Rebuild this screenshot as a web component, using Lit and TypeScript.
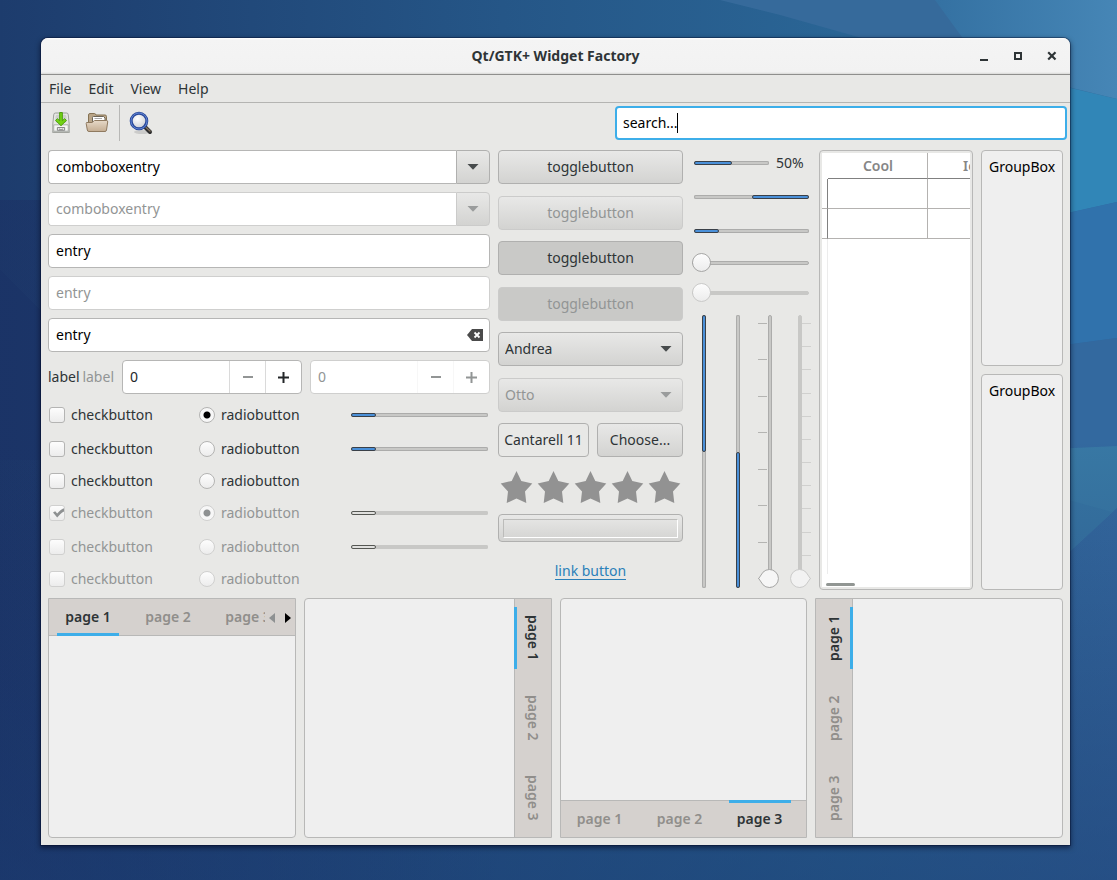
import { LitElement, html, css, svg, nothing } from "lit";
import { customElement, property } from "lit/decorators.js";
import { classMap } from "lit/directives/class-map.js";

const base = css`
  *,
  *::before,
  *::after {
    box-sizing: border-box;
  }
  button,
  input,
  select {
    font: inherit;
    color: inherit;
    margin: 0;
    outline: none;
  }
`;

const arrowDown = html`<svg class="arrow" width="12" height="6" viewBox="0 0 12 6" aria-hidden="true"><path d="M0.5 0H11.5L6 5.8Z" fill="currentColor" /></svg>`;

/** Tabbed pane with its tab bar on any of the four sides. */
@customElement("tab-pane")
class TabPane extends LitElement {
  @property() side = "top";
  @property({ type: Number }) active = 1;
  @property({ type: Boolean }) scroll = false;

  static styles = [
    base,
    css`
      :host {
        display: block;
        min-width: 0;
      }
      .pane {
        display: flex;
        height: 100%;
        background: #efefef;
        border: 1px solid #b8b8b7;
        border-radius: 4px;
        overflow: hidden;
      }
      .top {
        flex-direction: column;
        border-radius: 0 0 4px 4px;
      }
      .bottom {
        flex-direction: column-reverse;
        border-radius: 4px 4px 0 0;
      }
      .right {
        flex-direction: row-reverse;
        border-radius: 4px 0 0 4px;
      }
      .left {
        border-radius: 0 4px 4px 0;
      }
      .body {
        flex: 1;
      }
      .bar {
        display: flex;
        flex: none;
        background: #d5d1ce;
      }
      .tabs {
        display: flex;
        gap: 18px;
        overflow: hidden;
        flex: 1;
      }
      .top .bar {
        height: 37px;
        box-shadow: inset 0 -1px #b8b8b7;
      }
      .bottom .bar {
        height: 37px;
        box-shadow: inset 0 1px #b8b8b7;
      }
      .right .bar {
        width: 37px;
        box-shadow: inset 1px 0 #b8b8b7;
      }
      .left .bar {
        width: 37px;
        box-shadow: inset -1px 0 #b8b8b7;
      }
      .top .tabs,
      .bottom .tabs {
        padding: 0 8px;
      }
      .right .tabs,
      .left .tabs {
        flex-direction: column;
        padding: 8px 0;
      }
      .tab {
        flex: none;
        border: 0 solid transparent;
        background: none;
        padding: 0;
        font-weight: 600;
        color: #908e8b;
        text-align: center;
        white-space: nowrap;
      }
      .tab.on {
        color: #2e3436;
        border-color: #3daee9;
      }
      .top .tab {
        width: 62px;
        border-bottom-width: 3px;
        padding-top: 1px;
      }
      .bottom .tab {
        width: 62px;
        border-top-width: 3px;
        padding-bottom: 3px;
      }
      .right .tab,
      .left .tab {
        height: 62px;
        writing-mode: vertical-rl;
        border-left-width: 3px;
        padding-right: 1px;
      }
      .left .tab {
        transform: rotate(180deg);
      }
      .steps {
        display: flex;
        flex: none;
        gap: 2px;
      }
      .step {
        border: 0;
        background: none;
        width: 14px;
        padding: 0;
        color: #000;
      }
      .step:disabled {
        color: #8e9192;
      }
    `,
  ];

  render() {
    const tabs = [1, 2, 3].map(
      (n) => html`<button class=${classMap({ tab: true, on: n === this.active })} role="tab" aria-selected=${n === this.active}>page ${n}</button>`,
    );
    return html`<div class="pane ${this.side}">
      <div class="bar">
        <div class="tabs" role="tablist">${tabs}</div>
        ${this.scroll
          ? html`<div class="steps">
              <button class="step" disabled aria-label="Previous tabs"><svg width="6" height="10" viewBox="0 0 6 10"><path d="M6 0V10L0 5Z" fill="currentColor" /></svg></button>
              <button class="step" aria-label="Next tabs"><svg width="6" height="10" viewBox="0 0 6 10"><path d="M0 0V10L6 5Z" fill="currentColor" /></svg></button>
            </div>`
          : nothing}
      </div>
      <div class="body" role="tabpanel"></div>
    </div>`;
  }
}

const checks = [
  { slider: true, off: false, on: true },
  { slider: true, off: false, on: false },
  { slider: false, off: false, on: false },
  { slider: true, off: true, on: true },
  { slider: true, off: true, on: false },
  { slider: false, off: true, on: false },
];

@customElement("app-root")
class AppRoot extends LitElement {
  static styles = [
    base,
    css`
      :host {
        display: grid;
        position: relative;
        min-height: 100vh;
        padding: 38px 47px 35px 41px;
        font: 14px/20px "Noto Sans", "Open Sans", sans-serif;
        color: #2e3436;
        box-sizing: border-box;
        overflow: hidden;
      }
      .wallpaper {
        position: absolute;
        inset: 0;
        width: 100%;
        height: 100%;
      }
      .window {
        position: relative;
        display: flex;
        flex-direction: column;
        min-width: 0;
        background: #e8e8e6;
        border-radius: 7px 7px 0 0;
        box-shadow: 0 0 0 1px rgba(0, 10, 40, 0.35), 0 2px 5px 1px rgba(0, 0, 20, 0.5);
      }
      .title {
        display: grid;
        grid-template-columns: 1fr auto 1fr;
        align-items: center;
        height: 37px;
        border-radius: 7px 7px 0 0;
        background: linear-gradient(#fff, #f4f4f4 2px, #f2f2f2 34px, #d8d8d6);
        border-bottom: 1px solid #8f8f8d;
      }
      .title h1 {
        grid-column: 2;
        margin: 0;
        font-size: 14px;
        line-height: 20px;
        font-weight: 700;
      }
      .wm {
        display: flex;
        justify-content: flex-end;
        gap: 10px;
        padding-right: 6px;
      }
      .wm button {
        display: grid;
        place-items: center;
        width: 24px;
        height: 24px;
        padding: 0;
        border: 0;
        background: none;
      }
      .menu {
        display: flex;
        gap: 17px;
        height: 28px;
        padding: 0 8px;
        border-bottom: 1px solid #b4b4b2;
      }
      .menu button {
        border: 0;
        padding: 0;
        background: none;
      }
      .toolbar {
        display: flex;
        align-items: center;
        height: 40px;
        padding: 0 3px 0 2px;
      }
      .tool {
        display: grid;
        place-items: center;
        width: 36px;
        height: 34px;
        padding: 0;
        border: 0;
        background: none;
      }
      .sep {
        width: 1px;
        height: 36px;
        background: #b8b8b6;
        margin: 0 3px 0 4px;
      }
      .search {
        position: relative;
        width: 452px;
        margin-left: auto;
      }
      .search .entry {
        border: 2px solid #3daee9;
        padding: 0 6px 2px;
      }
      .caret {
        position: absolute;
        left: 62px;
        top: 7px;
        width: 1px;
        height: 20px;
        background: #000;
      }
      .main {
        display: grid;
        grid-template-columns: minmax(0, 1fr) 185px 120px 154px 82px;
        gap: 8px;
        padding: 7px 7px 8px;
      }
      .entries,
      .bars {
        display: grid;
        gap: 8px;
        align-content: start;
        min-width: 0;
      }
      .entry {
        display: block;
        width: 100%;
        min-width: 0;
        height: 34px;
        padding: 0 7px 2px;
        background: #fff;
        color: #000;
        border: 1px solid #b6b6b5;
        border-radius: 4px;
      }
      .entry:disabled {
        color: #929595;
        border-color: #cfcfce;
      }
      .combo {
        display: flex;
      }
      .combo .entry {
        border-radius: 4px 0 0 4px;
        border-right: 0;
      }
      .btn {
        height: 34px;
        padding: 0 6px;
        border: 1px solid #b0b0af;
        border-radius: 4px;
        background: linear-gradient(#e8e8e7, #d3d3d1);
        color: #2e3436;
      }
      .btn:disabled {
        border-color: #cbcbca;
        color: #929595;
      }
      .btn.down {
        background: #c9c9c7;
      }
      .combo .btn {
        flex: none;
        width: 34px;
        border-radius: 0 4px 4px 0;
        padding: 0;
      }
      .arrow {
        display: block;
        margin: auto;
        color: #474b4c;
      }
      .dim .arrow,
      :disabled .arrow {
        color: #9a9c9c;
      }
      .clear {
        position: relative;
      }
      .clear button {
        position: absolute;
        right: 7px;
        top: 0;
        height: 34px;
        padding: 0;
        border: 0;
        background: none;
        display: flex;
        align-items: center;
      }
      .spins {
        display: flex;
        gap: 8px;
        align-items: center;
      }
      .labels {
        display: flex;
        flex: 1;
        justify-content: space-between;
        min-width: 0;
      }
      .faded {
        color: #929595;
      }
      .spin {
        display: flex;
        width: 180px;
        height: 34px;
        flex: none;
        background: #fff;
        border: 1px solid #b6b6b5;
        border-radius: 4px;
        color: #232629;
      }
      .spin input {
        flex: 1;
        min-width: 0;
        border: 0;
        padding: 0 7px;
        background: none;
        appearance: textfield;
        color: #232629;
      }
      .spin input::-webkit-inner-spin-button {
        display: none;
      }
      .spin button {
        width: 36px;
        padding: 0;
        border: 0;
        border-left: 1px solid #dadada;
        background: none;
        display: grid;
        place-items: center;
      }
      .spin button:disabled {
        color: #929595;
      }
      .spin.dim {
        border-color: #cfcfce;
      }
      .spin.dim input {
        color: #929595;
      }
      .spin.dim button {
        border-left-color: #f7f7f7;
      }
      .checks {
        display: grid;
        grid-template-columns: 150fr 152fr 140fr;
        grid-template-rows: 26px 26px 22px 26px 26px 22px;
        gap: 8px 0;
        align-items: center;
      }
      .check {
        display: flex;
        align-items: center;
        gap: 6px;
        padding-left: 1px;
      }
      .check input {
        appearance: none;
        width: 16px;
        height: 16px;
        border: 1px solid #b4b4b3;
        border-radius: 3px;
        background: linear-gradient(#fdfdfd, #ececec);
      }
      .check input[type="radio"] {
        border-radius: 50%;
      }
      .check input:disabled {
        border-color: #d0d0cf;
      }
      .check input[type="radio"]:checked {
        background: radial-gradient(circle, #000 3px, #f7f7f7 4px);
      }
      .check input[type="radio"]:checked:disabled {
        background: radial-gradient(circle, #8e9192 3px, #f7f7f7 4px);
      }
      .tick {
        position: relative;
        display: flex;
      }
      .tick svg {
        position: absolute;
        left: 3px;
        top: 3px;
      }
      progress {
        appearance: none;
        display: block;
        border: 0;
        width: 100%;
        height: 4px;
        background: #c8c8c7;
        border-radius: 2px;
      }
      progress::-webkit-progress-bar {
        background: #c8c8c6;
        box-shadow: inset 0 0 0 1px #acacab;
        border-radius: 2px;
      }
      progress::-webkit-progress-value {
        box-sizing: border-box;
        background: #4a90d9;
        border: 1px solid #3a4048;
        border-radius: 2px;
      }
      progress.faint::-webkit-progress-bar {
        box-shadow: none;
      }
      progress.faint::-webkit-progress-value {
        background: #e0e0de;
        border-color: #555753;
      }
      .checks progress {
        width: auto;
        margin-right: 2px;
        margin-left: 1px;
        min-width: 0;
        justify-self: stretch;
      }
      .buttons {
        display: flex;
        flex-direction: column;
        justify-content: space-between;
      }
      .select {
        position: relative;
      }
      .select select {
        appearance: none;
        display: block;
        width: 100%;
        opacity: 1;
      }
      .select .arrow {
        position: absolute;
        right: 11px;
        top: 14px;
        pointer-events: none;
      }
      .fonts {
        display: grid;
        grid-template-columns: 91fr 86fr;
        gap: 8px;
      }
      .fonts .btn {
        padding: 0;
      }
      .fonts .flat {
        background: #e8e8e6;
      }
      .stars {
        display: flex;
        justify-content: space-between;
        height: 34px;
        padding: 2px 2px 0;
      }
      .colour {
        height: 28px;
        padding: 4px;
      }
      .swatch {
        display: block;
        height: 19px;
        border: 1px solid #fff;
        border-top-color: #bcbcba;
        border-left-color: #bcbcba;
      }
      .link {
        display: grid;
        place-items: center;
        height: 36px;
      }
      .link a {
        color: #2a80b9;
        text-decoration: none;
        border-bottom: 1px solid #2a80b9;
        line-height: 16px;
      }
      .bars {
        grid-template-rows: 26px 26px 26px 22px 22px minmax(0, 1fr);
        align-items: center;
        padding: 0 2px 0 3px;
        align-content: stretch;
      }
      .percent {
        display: grid;
        grid-template-columns: 75px auto;
        gap: 7px;
        align-items: center;
      }
      .reverse {
        direction: rtl;
      }
      input[type="range"] {
        appearance: none;
        display: block;
        width: calc(100% + 2px);
        height: 19px;
        margin-left: -2px;
        background: none;
      }
      input[type="range"]::-webkit-slider-runnable-track {
        height: 4px;
        background: #c8c8c6;
        border: 1px solid #acacab;
        border-radius: 2px;
      }
      input[type="range"]::-webkit-slider-thumb {
        appearance: none;
        width: 19px;
        height: 19px;
        margin-top: -9px;
        margin-left: -1px;
        border: 1px solid #a6a6a5;
        border-radius: 50%;
        background: linear-gradient(#fdfdfd, #ececec);
      }
      input[type="range"]:disabled::-webkit-slider-runnable-track {
        border-color: #c8c8c6;
      }
      input[type="range"]:disabled::-webkit-slider-thumb {
        border-color: #cacac9;
      }
      .uprights {
        display: flex;
        contain: size;
        height: 100%;
        padding: 3px 0 2px 8px;
      }
      .uprights progress {
        flex: none;
        writing-mode: vertical-lr;
        width: 4px;
        height: 100%;
      }
      .uprights progress.reverse {
        margin: 0 20px 0 30px;
      }
      .scale {
        position: relative;
        flex: none;
        width: 20px;
        margin-right: 10px;
      }
      .scale input[type="range"] {
        position: absolute;
        inset: 0;
        margin: 0;
        writing-mode: vertical-lr;
        direction: rtl;
        width: 20px;
        height: 100%;
      }
      .scale input[type="range"]::-webkit-slider-runnable-track {
        width: 4px;
        height: 100%;
      }
      .scale input[type="range"]::-webkit-slider-thumb {
        width: 21px;
        margin: 0 0 -1px -11px;
        border: 0;
        border-radius: 0;
        background: url("data:image/svg+xml,%3Csvg xmlns='http://www.w3.org/2000/svg' width='21' height='19'%3E%3Cpath d='M.7 9.500L5 3.200A9 9 0 1 1 5 15.800Z' fill='%23f6f6f6' stroke='%23a6a6a5'/%3E%3C/svg%3E");
      }
      .scale input[type="range"]:disabled::-webkit-slider-thumb {
        margin-left: -9px;
        background: url("data:image/svg+xml,%3Csvg xmlns='http://www.w3.org/2000/svg' width='21' height='19'%3E%3Cpath d='M20.300 9.500L16 3.200A9 9 0 1 0 16 15.800Z' fill='%23f2f2f2' stroke='%23cacac9'/%3E%3C/svg%3E");
      }
      .ticks {
        position: absolute;
        top: 8px;
        bottom: 9px;
        width: 9px;
        display: flex;
        flex-direction: column;
        justify-content: space-between;
      }
      .ticks i {
        height: 1px;
        background: #b4b4b2;
      }
      .ticks.l {
        left: -2px;
      }
      .ticks.r {
        left: 12px;
      }
      .ticks.r i {
        background: #d0d0ce;
      }
      .view {
        display: flex;
        border: 1px solid #b8b8b7;
        border-radius: 4px;
        padding: 2px;
      }
      .sheet {
        flex: 1;
        min-width: 0;
        display: flex;
        flex-direction: column;
        overflow: hidden;
        background: #fff;
      }
      .grid {
        flex: none;
        width: 206px;
        table-layout: fixed;
        border-collapse: separate;
        border-spacing: 0;
      }
      .grid th,
      .grid td {
        padding: 0;
        height: 30px;
        border-right: 1px solid #b4b2b0;
        border-bottom: 1px solid #b4b2b0;
      }
      .grid th {
        height: 26px;
        padding-left: 1px;
        font-weight: 600;
        color: #868686;
        border-bottom-color: #808080;
      }
      .grid .corner {
        width: 6px;
        border-color: transparent;
      }
      .grid .side {
        border-right-color: #808080;
      }
      .margin {
        flex: 1;
        width: 6px;
        border-right: 1px solid #ececec;
      }
      .scroller {
        height: 3px;
        width: 29px;
        margin: 9px 4px 1px;
        border-radius: 2px;
        background: #919693;
      }
      .groups {
        display: grid;
        gap: 8px;
      }
      .group {
        margin: 0;
        padding: 6px 7px;
        background: #efefef;
        border: 1px solid #b8b8b7;
        border-radius: 4px;
        color: #000;
        white-space: nowrap;
      }
      .panes {
        flex: 1;
        display: grid;
        grid-template-columns: repeat(4, minmax(0, 1fr));
        gap: 8px;
        padding: 0 7px 7px;
      }
    `,
  ];

  wallpaper() {
    return html`<svg class="wallpaper" viewBox="0 0 1117 880" preserveAspectRatio="none" aria-hidden="true">
      <defs>
        <linearGradient id="sky" x1="0" y1="0" x2="1" y2="0">
          <stop offset="0" stop-color="#1d3c6d" />
          <stop offset="0.45" stop-color="#255687" />
          <stop offset="0.75" stop-color="#2a6595" />
          <stop offset="1" stop-color="#34699f" />
        </linearGradient>
        <linearGradient id="dusk" x1="0" y1="0" x2="0" y2="1">
          <stop offset="0" stop-color="#18285f" stop-opacity="0" />
          <stop offset="0.5" stop-color="#1a2c62" stop-opacity="0" />
          <stop offset="1" stop-color="#1a3a70" stop-opacity="0.55" />
        </linearGradient>
        <linearGradient id="left" x1="0" y1="0" x2="1" y2="0">
          <stop offset="0" stop-color="#1a2c60" />
          <stop offset="1" stop-color="#1a2c60" stop-opacity="0" />
        </linearGradient>
        <linearGradient id="glow" x1="0" y1="0" x2="1" y2="0">
          <stop offset="0" stop-color="#3471a2" />
          <stop offset="1" stop-color="#4686b6" />
        </linearGradient>
      </defs>
      <rect width="1117" height="880" fill="url(#sky)" />
      <path d="M720 0H1117V110L780 15Z" fill="#366a9b" />
      <path d="M935 0H1117V99L1060 85L975 55Z" fill="url(#glow)" />
      <path d="M1050 83L1117 99V202L1050 217Z" fill="#3186b7" />
      <path d="M1050 217L1117 202V338L1050 347Z" fill="#3072ac" />
      <path d="M1050 347L1117 338V446L1050 449Z" fill="#33699f" />
      <path d="M1050 449L1117 446V508L1050 570Z" fill="#3878a4" />
      <path d="M1050 495L1112 512L1050 570Z" fill="#3674a2" />
      <rect y="200" width="500" height="680" fill="url(#left)" opacity="0.4" />
      <path d="M0 270L60 330V460H0Z" fill="#1a3266" opacity="0.5" />
      <rect width="1117" height="880" fill="url(#dusk)" />
    </svg>`;
  }

  stars() {
    return [0, 1, 2, 3, 4].map(
      () => html`<svg width="33" height="32" viewBox="0 0 33 32" aria-hidden="true"><path d="M16.5 0L21.3 10L32.3 12.4L25 20.6L26.3 32L16.5 27.4L6.7 32L8 20.6L0.7 12.4L11.7 10Z" fill="#929292" /></svg>`,
    );
  }

  checkRow(row: { slider: boolean; off: boolean; on: boolean }) {
    const group = row.off ? "b" : "a";
    const faded = row.off ? "faded" : "";
    const ticked = row.off && row.on;
    return html`<label class="check ${faded}"
        ><span class="tick"
          ><input type="checkbox" ?checked=${ticked} ?disabled=${row.off} />${ticked
            ? html`<svg width="13" height="10" viewBox="0 0 13 10"><path d="M1 4.5L3.2 3.2L5.2 5.6C7 3.2 9 1.4 12 0.2V3.5C9.5 4.8 7.4 6.8 5.2 9.6Z" fill="#8e9192" /></svg>`
            : nothing}</span
        >checkbutton</label
      >
      <label class="check ${faded}"><input type="radio" name=${group} ?checked=${row.on} ?disabled=${row.off} />radiobutton</label>
      ${row.slider ? html`<progress class=${row.off ? "faint" : ""} value="18" max="100" aria-label="Level"></progress>` : html`<span></span>`}`;
  }

  spin(off: boolean) {
    const plus = svg`<path d="M4.5 0H6.5V4.5H11V6.5H6.5V11H4.5V6.5H0V4.5H4.5Z" fill="currentColor" />`;
    return html`<div class="spin ${off ? "dim" : ""}">
      <input type="number" value="0" ?disabled=${off} aria-label="Value" />
      <button disabled aria-label="Decrease"><svg width="10" height="2"><rect width="10" height="2" fill="currentColor" /></svg></button>
      <button ?disabled=${off} aria-label="Increase"><svg width="11" height="11" viewBox="0 0 11 11">${plus}</svg></button>
    </div>`;
  }

  ticks(count: number, side: string) {
    return html`<span class="ticks ${side}">${Array.from({ length: count }, () => html`<i></i>`)}</span>`;
  }

  render() {
    return html`${this.wallpaper()}
      <div class="window">
        <header class="title">
          <h1>Qt/GTK+ Widget Factory</h1>
          <div class="wm">
            <button aria-label="Minimize"><svg width="8" height="9"><rect y="7" width="8" height="2" fill="#2e3436" /></svg></button>
            <button aria-label="Maximize"><svg width="8" height="8"><rect x="1" y="1" width="6" height="6" fill="none" stroke="#2e3436" stroke-width="2" /></svg></button>
            <button aria-label="Close"><svg width="10" height="10"><path d="M1.200 1.200L8.500 8.500M8.500 1.200L1.200 8.500" stroke="#2e3436" stroke-width="2.2" /></svg></button>
          </div>
        </header>
        <nav class="menu"><button>File</button><button>Edit</button><button>View</button><button>Help</button></nav>
        <div class="toolbar">
          <button class="tool" aria-label="Save">
            <svg width="20" height="24" viewBox="0 0 22 24">
              <rect x="1" y="21" width="20" height="2" rx="1" fill="#8a8d88" opacity="0.6" />
              <path d="M3 3Q3 1 5 1H17Q19 1 19 3L20 13V21Q20 22 19 22H3Q2 22 2 21V13Z" fill="#e6e8e4" stroke="#969994" />
              <rect x="5" y="3" width="12" height="9" rx="2" fill="#cdd0cb" />
              <path d="M3 14H19V21H3Z" fill="#f6f7f5" stroke="#a5a8a3" />
              <path d="M7 17H15V20H7Z" fill="#fff" stroke="#777" />
              <path d="M9 18V19H13V18" fill="none" stroke="#888" />
              <path d="M9.500 0.500H12.500V9.500L15 7.200L17 9.200L11 15L5 9.200L7 7.200L9.500 9.500Z" fill="#73d216" stroke="#459a08" />
            </svg>
          </button>
          <button class="tool" aria-label="Open">
            <svg width="24" height="22" viewBox="0 0 24 22">
              <defs>
                <linearGradient id="fold" x1="0" y1="0" x2="0" y2="1"><stop offset="0" stop-color="#e6d9c8" /><stop offset="1" stop-color="#c4ad92" /></linearGradient>
              </defs>
              <path d="M3.500 18V3Q3.500 1.500 5 1.500H9.500Q10.500 1.500 11 3H20Q21.500 3 21.500 4.500V12H3.500Z" fill="#b9a588" stroke="#857253" />
              <path d="M7.500 5.500Q7.500 4.500 8.500 4.500H18.500L20 6V12H7.500Z" fill="#fff" stroke="#6c6558" />
              <path d="M9.500 6.500H17" stroke="#aaa" />
              <path d="M1.500 10.500H7L9.500 8.500H21.500Q23 8.500 22.700 10L21.500 18Q21.300 19.500 20 19.500H4Q2.500 19.500 2.300 18L1.200 11.500Z" fill="url(#fold)" stroke="#8f7a60" />
            </svg>
          </button>
          <span class="sep"></span>
          <button class="tool" aria-label="Find">
            <svg width="24" height="24" viewBox="0 0 24 24">
              <defs>
                <radialGradient id="glass" cx="0.4" cy="0.35" r="0.7"><stop offset="0" stop-color="#fff" /><stop offset="1" stop-color="#c9ccd2" /></radialGradient>
              </defs>
              <ellipse cx="13" cy="21" rx="8" ry="2" fill="#000" opacity="0.12" />
              <path d="M16 16L21 21" stroke="#2e2e2e" stroke-width="4" stroke-linecap="round" />
              <path d="M17 16.500L21 20" stroke="#80705e" stroke-width="1.500" stroke-linecap="round" />
              <circle cx="10" cy="10" r="7.800" fill="url(#glass)" stroke="#2b4a9b" stroke-width="3" />
              <circle cx="10" cy="10" r="8" fill="none" stroke="#5f83d2" stroke-width="1" />
            </svg>
          </button>
          <div class="search"><input class="entry" type="text" value="search..." aria-label="Search" /><span class="caret"></span></div>
        </div>

        <div class="main">
          <section class="entries">
            <div class="combo"><input class="entry" value="comboboxentry" aria-label="Combo entry" /><button class="btn" aria-label="Show list">${arrowDown}</button></div>
            <div class="combo"><input class="entry" value="comboboxentry" disabled aria-label="Disabled combo entry" /><button class="btn" disabled aria-label="Show list">${arrowDown}</button></div>
            <input class="entry" value="entry" aria-label="Entry" />
            <input class="entry" value="entry" disabled aria-label="Disabled entry" />
            <div class="clear">
              <input class="entry" value="entry" aria-label="Clearable entry" />
              <button aria-label="Clear">
                <svg width="16" height="12" viewBox="0 0 16 12"><path d="M5 0H16V12H5L0 6Z" fill="#4a4a4a" /><path d="M7.500 3.500L12.500 8.500M12.500 3.500L7.500 8.500" stroke="#fff" stroke-width="1.800" /></svg>
              </button>
            </div>
            <div class="spins">
              <div class="labels"><span>label</span><span class="faded">label</span></div>
              ${this.spin(false)}${this.spin(true)}
            </div>
            <div class="checks">${checks.map((row) => this.checkRow(row))}</div>
          </section>

          <section class="buttons">
            <button class="btn">togglebutton</button>
            <button class="btn" disabled>togglebutton</button>
            <button class="btn down" aria-pressed="true">togglebutton</button>
            <button class="btn down" aria-pressed="true" disabled>togglebutton</button>
            <div class="select"><select class="btn" aria-label="Name"><option>Andrea</option><option>Otto</option></select>${arrowDown}</div>
            <div class="select dim"><select class="btn" disabled aria-label="Disabled name"><option>Otto</option></select>${arrowDown}</div>
            <div class="fonts"><button class="btn flat">Cantarell 11</button><button class="btn">Choose...</button></div>
            <div class="stars" role="img" aria-label="Rating">${this.stars()}</div>
            <button class="btn colour" aria-label="Pick a colour"><span class="swatch"></span></button>
            <div class="link"><a href="#link">link button</a></div>
          </section>

          <section class="bars">
            <div class="percent"><progress value="50" max="100" aria-label="Progress"></progress><span>50%</span></div>
            <progress class="reverse" value="50" max="100" aria-label="Reversed progress"></progress>
            <progress value="22" max="100" aria-label="Level"></progress>
            <input type="range" value="0" aria-label="Scale" />
            <input type="range" value="0" disabled aria-label="Disabled scale" />
            <div class="uprights">
              <progress value="50" max="100" aria-label="Vertical progress"></progress>
              <progress class="reverse" value="50" max="100" aria-label="Vertical progress, reversed"></progress>
              <div class="scale">${this.ticks(8, "l")}<input type="range" value="0" aria-label="Vertical scale" /></div>
              <div class="scale">${this.ticks(12, "r")}<input type="range" value="0" disabled aria-label="Disabled vertical scale" /></div>
            </div>
          </section>

          <section class="view">
            <div class="sheet">
              <table class="grid">
                <thead>
                  <tr><th class="corner"></th><th>Cool</th><th>Icon</th></tr>
                </thead>
                <tbody>
                  <tr><td class="side"></td><td></td><td></td></tr>
                  <tr><td class="side"></td><td></td><td></td></tr>
                </tbody>
              </table>
              <div class="margin"></div>
              <div class="scroller"></div>
            </div>
          </section>

          <section class="groups">
            <div class="group" role="group">GroupBox</div>
            <div class="group" role="group">GroupBox</div>
          </section>
        </div>

        <div class="panes">
          <tab-pane side="top" scroll></tab-pane>
          <tab-pane side="right"></tab-pane>
          <tab-pane side="bottom" .active=${3}></tab-pane>
          <tab-pane side="left"></tab-pane>
        </div>
      </div>`;
  }
}
